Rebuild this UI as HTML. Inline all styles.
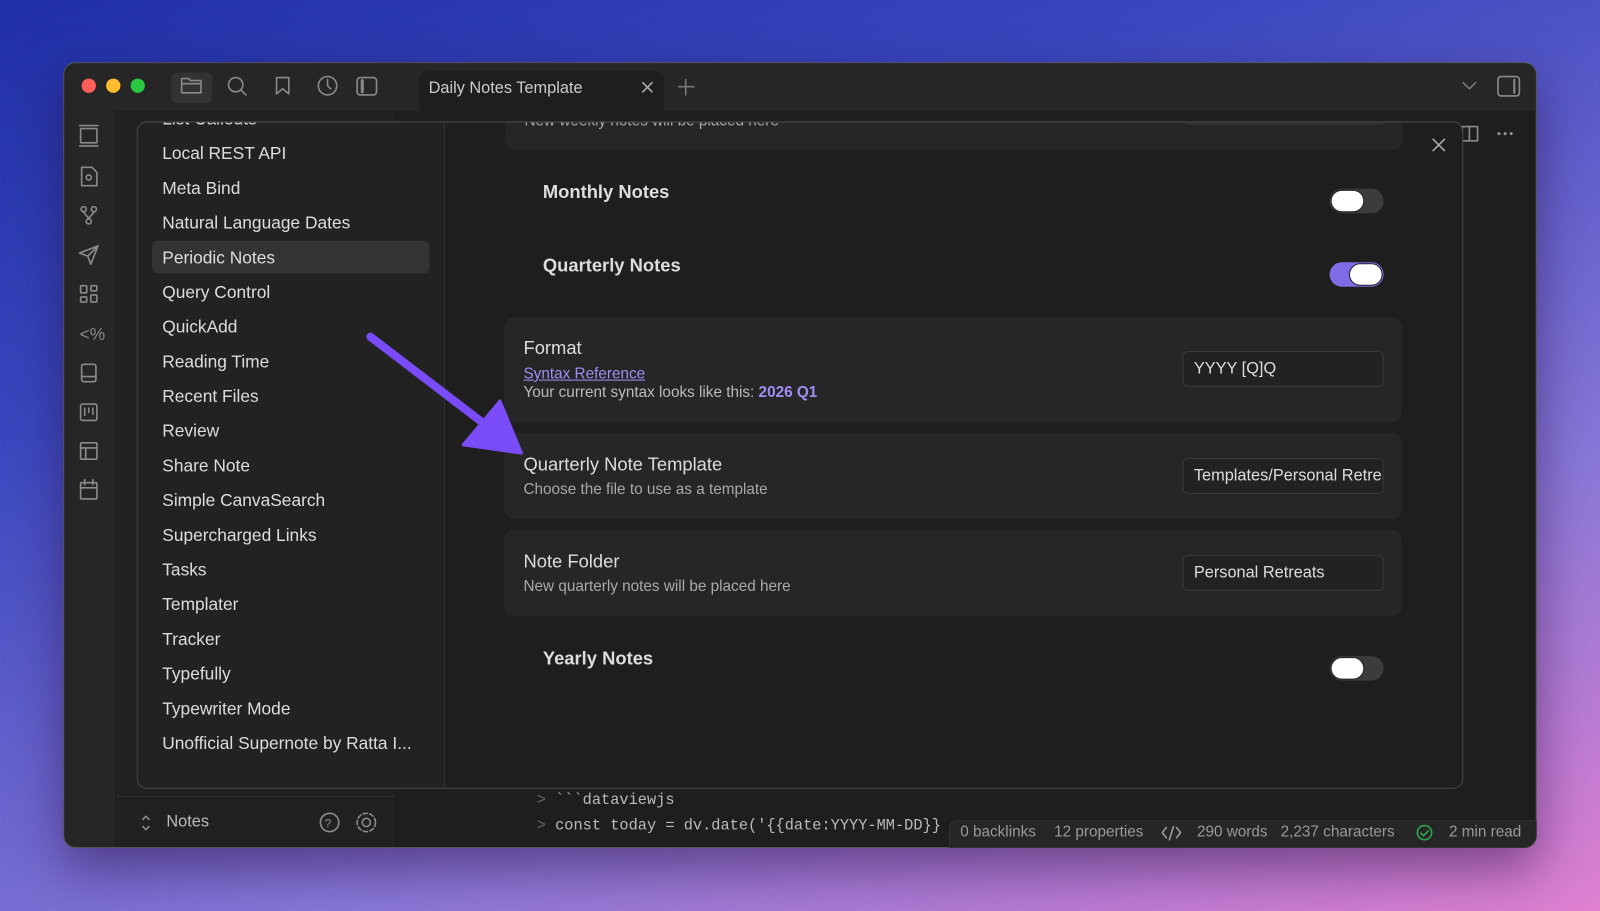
<!DOCTYPE html>
<html><head><meta charset="utf-8"><style>
*{box-sizing:border-box;margin:0;padding:0}
html,body{width:1600px;height:911px;overflow:hidden}
body{background:linear-gradient(160deg,#1f2fa6 0%,#3a48c0 30%,#8a78d8 70%,#e07fd0 100%);font-family:"Liberation Sans",sans-serif;}
#w{position:absolute;left:0;top:0;width:1568px;height:893px;transform:scale(1.020408);transform-origin:0 0}
.a{position:absolute}
.win{left:62px;top:61px;width:1444px;height:770px;border-radius:12px;background:#1e1e1e;overflow:hidden;border:1px solid #555;box-shadow:0 20px 50px rgba(40,10,60,.5)}
.t{color:#ddd;font-size:17px;white-space:nowrap}
.ic{stroke:#8a8a8a;fill:none;stroke-width:1.6;stroke-linecap:round;stroke-linejoin:round}
.card{background:#262626;border-radius:10px;left:494px;width:880px}
.inp{left:1159px;width:197px;height:35px;border:1px solid #3a3a3a;border-radius:5px;background:#222;color:#ddd;font-size:16px;padding:8px 10px;white-space:nowrap;overflow:hidden}
.tg{width:53px;height:24px;border-radius:12px;background:#3c3c3c}
.tg i{position:absolute;top:1px;left:1px;width:33px;height:22px;border-radius:11px;background:#fff;border:1px solid #222}
.tg.on{background:#7e6be6}.tg.on i{left:19px}
.st{color:#999;font-size:15px;top:807px;white-space:nowrap}
</style></head><body><div id="w">
<div class="a win">
 <div class="a" style="left:0;top:0;width:1444px;height:47px;background:#262626"></div>
 <div class="a" style="left:0;top:47px;width:51px;height:723px;background:#262626;border-right:1px solid #1a1a1a"></div>
 <div class="a" style="left:51px;top:47px;width:274px;height:723px;background:#212121;border-right:1px solid #1a1a1a"></div>
 <div class="a" style="left:51px;top:718px;width:274px;height:1px;background:#2e2e2e"></div>
 <div class="a" style="left:348px;top:8px;width:240px;height:40px;background:#1e1e1e;border-radius:8px 8px 0 0"></div>
 <div class="a" style="left:105px;top:9px;width:40px;height:30px;background:#333;border-radius:6px"></div>
</div>
<div class="a" style="left:930px;top:804px;width:576px;height:27px;background:#262626;border-radius:8px 0 12px 0;border:1px solid #333"></div>
<div class="a" style="left:80px;top:77px;width:14px;height:14px;border-radius:7px;background:#fe5f57"></div>
<div class="a" style="left:104px;top:77px;width:14px;height:14px;border-radius:7px;background:#febc2e"></div>
<div class="a" style="left:128px;top:77px;width:14px;height:14px;border-radius:7px;background:#28c840"></div>
<svg class="a" style="left:0;top:0" width="1568" height="893">
 <g class="ic">
  <path d="M178 77h7l2 2h10v12h-19z M178 82h19"/>
  <circle cx="231" cy="83" r="7"/><path d="M236 88l5 5"/>
  <path d="M271 76h12v16l-6-5-6 5z"/>
  <circle cx="321" cy="84" r="9"/><path d="M321 78v6l3 3"/>
  <rect x="350" y="76" width="19" height="17" rx="3"/><path d="M355 79v11" stroke-width="3"/>
  <path d="M630 81l9 9M639 81l-9 9" stroke="#aaa"/>
  <path d="M672 78v15M665 85h15" stroke="#777"/>
  <path d="M1434 81l6 6 6-6" stroke="#777"/>
  <rect x="1468" y="75" width="21" height="19" rx="3"/><path d="M1484 78v13" stroke-width="2"/>
  <rect x="79" y="126" width="16" height="14" rx="1"/><path d="M78 123h18M78 143h18"/>
  <path d="M80 164h10l5 5v13h-15z"/><circle cx="87" cy="174" r="2.5"/>
  <circle cx="82" cy="205" r="2.5"/><circle cx="92" cy="205" r="2.5"/><circle cx="87" cy="217" r="2.5"/><path d="M82 208l5 6M92 208l-5 6"/>
  <path d="M96 241l-18 7 8 3 3 8z M86 251l10-10"/>
  <rect x="79" y="280" width="6" height="7" rx="1"/><rect x="89" y="280" width="6" height="5" rx="1"/><rect x="79" y="291" width="6" height="5" rx="1"/><rect x="89" y="289" width="6" height="7" rx="1"/>
  <rect x="80" y="357" width="14" height="17" rx="2"/><path d="M80 369h14"/>
  <rect x="79" y="396" width="16" height="16" rx="2"/><path d="M83 400v7M87 400v4M91 400v6"/>
  <rect x="79" y="434" width="16" height="16" rx="1"/><path d="M79 439h16M84 439v11"/>
  <rect x="79" y="473" width="16" height="16" rx="1"/><path d="M79 478h16M83 470v5M91 470v5"/>
  <path d="M140 803l3-3 3 3M140 810l3 3 3-3"/>
  <circle cx="323" cy="806" r="9"/>
  <circle cx="359" cy="806" r="4"/><circle cx="359" cy="806" r="9" stroke-dasharray="4 2.5"/>
  <path d="M1433 124h7v14h-7zM1440 124h8v14h-8z"/>
  <path d="M1143 811l-4 5 4 5M1153 811l4 5-4 5M1150 810l-4 13" stroke="#999"/>
 </g>
 <text x="78" y="333" fill="#8a8a8a" font-size="17" font-family="Liberation Sans">&lt;%</text>
 <text x="318" y="811" fill="#8a8a8a" font-size="12" font-family="Liberation Sans">?</text>
 <circle cx="1396" cy="816" r="7" fill="none" stroke="#2fa44f" stroke-width="1.6"/><path d="M1392 816l3 3 5-5" fill="none" stroke="#2fa44f" stroke-width="1.6"/>
 <circle cx="1469" cy="131" r="1.5" fill="#999"/><circle cx="1475" cy="131" r="1.5" fill="#999"/><circle cx="1481" cy="131" r="1.5" fill="#999"/>
</svg>
<div class="a t" style="left:420px;top:78px;font-size:16px;color:#ccc">Daily Notes Template</div>
<div class="a" style="left:526px;top:772px;font-family:'Liberation Mono',monospace;font-size:15px;color:#bbb;line-height:25px;white-space:pre"><span style="color:#666">&gt; </span>&#96;&#96;&#96;dataviewjs
<span style="color:#666">&gt; </span>const today = dv.date('&#123;&#123;date:YYYY-MM-DD&#125;&#125;</div>
<div class="a t" style="left:163px;top:797px;font-size:16px;color:#bbb">Notes</div>
<div class="a st" style="left:941px">0 backlinks</div>
<div class="a st" style="left:1033px">12 properties</div>
<div class="a st" style="left:1173px">290 words</div>
<div class="a st" style="left:1255px">2,237 characters</div>
<div class="a st" style="left:1420px">2 min read</div>
<div class="a" style="left:134px;top:119px;width:1300px;height:654px;border-radius:10px;background:#1e1e1e;border:1px solid #4a4a4a;overflow:hidden">
 <div class="a" style="left:0;top:0;width:301px;height:654px;background:#222;border-right:1px solid #333"></div>
 <div class="a" style="left:14px;top:116px;width:272px;height:32px;background:#333;border-radius:6px"></div>
 <div class="a" style="left:24px;top:-20px;line-height:34px;color:#ddd;font-size:17px;white-space:nowrap">List Callouts<br>Local REST API<br>Meta Bind<br>Natural Language Dates<br>Periodic Notes<br>Query Control<br>QuickAdd<br>Reading Time<br>Recent Files<br>Review<br>Share Note<br>Simple CanvaSearch<br>Supercharged Links<br>Tasks<br>Templater<br>Tracker<br>Typefully<br>Typewriter Mode<br>Unofficial Supernote by Ratta I...</div>
 <div class="a card" style="left:360px;top:-20px;height:47px"></div>
 <div class="a" style="left:1025px;top:-20px;width:197px;height:22px;border:1px solid #3a3a3a;border-radius:5px"></div>
 <div class="a t" style="left:379px;top:-10px;color:#aaa;font-size:15px">New weekly notes will be placed here</div>
</div>
<svg class="a" style="left:0;top:0" width="1568" height="893"><path d="M1404 136l12 12M1416 136l-12 12" stroke="#aaa" stroke-width="1.6"/></svg>
<div class="a t" style="left:532px;top:178px;font-weight:bold;font-size:18px">Monthly Notes</div>
<div class="a tg" style="left:1303px;top:185px"><i></i></div>
<div class="a t" style="left:532px;top:250px;font-weight:bold;font-size:18px">Quarterly Notes</div>
<div class="a tg on" style="left:1303px;top:257px"><i></i></div>
<div class="a card" style="top:311px;height:103px"></div>
<div class="a t" style="left:513px;top:331px;font-size:18px">Format</div>
<div class="a t" style="left:513px;top:358px;font-size:15px;color:#a48cf5;text-decoration:underline">Syntax Reference</div>
<div class="a t" style="left:513px;top:376px;font-size:15px;color:#bbb">Your current syntax looks like this: <b style="color:#a48cf5">2026 Q1</b></div>
<div class="a inp" style="top:344px">YYYY [Q]Q</div>
<div class="a card" style="top:424px;height:85px"></div>
<div class="a t" style="left:513px;top:445px;font-size:18px">Quarterly Note Template</div>
<div class="a t" style="left:513px;top:471px;font-size:15px;color:#aaa">Choose the file to use as a template</div>
<div class="a inp" style="top:449px">Templates/Personal Retreats</div>
<div class="a card" style="top:519px;height:85px"></div>
<div class="a t" style="left:513px;top:540px;font-size:18px">Note Folder</div>
<div class="a t" style="left:513px;top:566px;font-size:15px;color:#aaa">New quarterly notes will be placed here</div>
<div class="a inp" style="top:544px">Personal Retreats</div>
<div class="a t" style="left:532px;top:635px;font-weight:bold;font-size:18px">Yearly Notes</div>
<div class="a tg" style="left:1303px;top:643px"><i></i></div>
<svg class="a" style="left:0;top:0" width="1568" height="893"><path d="M363 330L478 418" stroke="#7a4cf7" stroke-width="8" stroke-linecap="round"/><path d="M454 436L511 444L490 393Z" fill="#7a4cf7" stroke="#7a4cf7" stroke-width="3" stroke-linejoin="round"/></svg>
</div></body></html>
